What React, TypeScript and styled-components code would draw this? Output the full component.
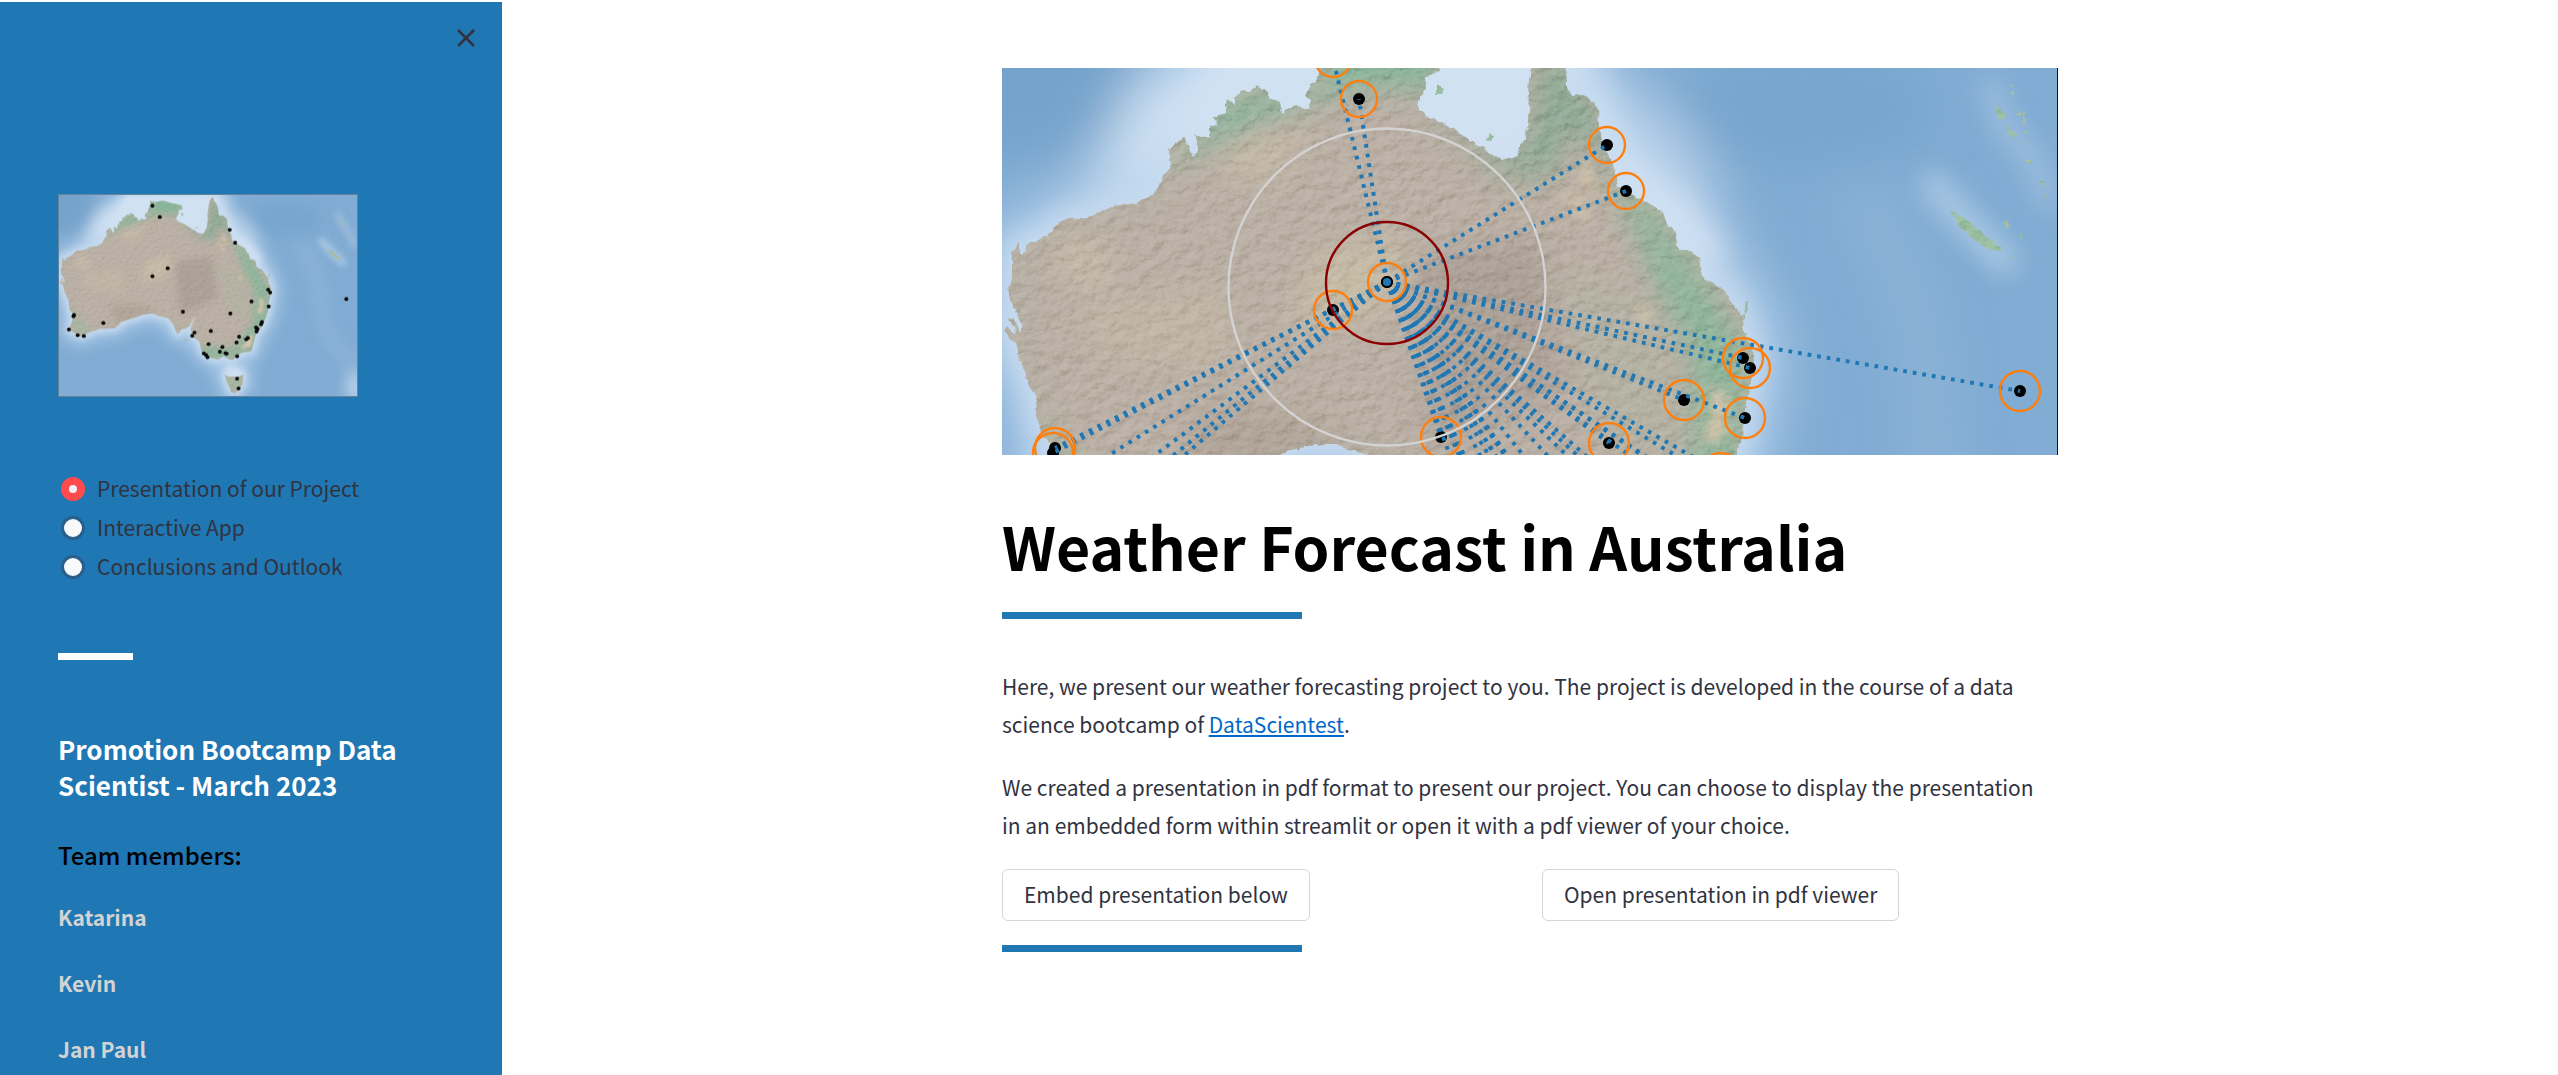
import React, { useId, useState } from "react";
import styled, { createGlobalStyle } from "styled-components";

const BLUE = "#1f77b4";
const INK = "#31333f";
const FONT = '"Noto Sans CJK SC", "Open Sans", sans-serif';

const GlobalStyle = createGlobalStyle`
  *, *::before, *::after { box-sizing: border-box; }
  body {
    margin: 0;
    background: #fff;
    color: ${INK};
    font-family: ${FONT};
    font-size: 21px;
    line-height: 38px;
  }
`;

const Page = styled.div`
  display: flex;
  height: 100vh;
  padding-top: 2px;
  overflow: hidden;
`;

const Sidebar = styled.aside`
  display: flex;
  flex-direction: column;
  flex: 0 0 502px;
  padding: 24px 24px 0 58px;
  background: ${BLUE};
  overflow: hidden;
`;

const CloseButton = styled.button`
  display: flex;
  align-self: flex-end;
  padding: 0;
  border: 0;
  background: none;
  color: ${INK};
  cursor: pointer;
`;

const Thumbnail = styled.figure`
  flex: none;
  width: 300px;
  height: 203px;
  margin: 144px 0 0;
  border: 1px solid #66839c;

  svg { display: block; width: 100%; height: 100%; }
`;

const RadioGroup = styled.fieldset`
  display: flex;
  flex-direction: column;
  margin: 72px 0 0;
  padding: 0;
  border: 0;
`;

const RadioLabel = styled.label`
  display: flex;
  align-items: center;
  gap: 12px;
  height: 39px;
  padding-left: 3px;
  cursor: pointer;
`;

const RadioText = styled.span`
  padding-bottom: 1px;
`;

const RadioInput = styled.input`
  appearance: none;
  flex: none;
  width: 24px;
  height: 24px;
  margin: 0;
  border: 3px solid #285f8d;
  border-radius: 50%;
  background: #f9f9fb;

  &:checked {
    border: 8px solid #ff4b4b;
    background: #f0f2f6;
  }
`;

const Rule = styled.hr<{ $width: number; $color: string }>`
  flex: none;
  width: ${(p) => p.$width}px;
  height: 7px;
  margin: 0;
  border: 0;
  background: ${(p) => p.$color};
`;

const SidebarRule = styled.div`
  padding: 67px 0 71px;
`;

const Promotion = styled.h3`
  margin: 0;
  color: #fff;
  font-size: 26px;
  font-weight: 700;
  line-height: 36px;
`;

const TeamTitle = styled.h4`
  margin: 33px 0 0;
  color: #000;
  font-size: 24px;
  font-weight: 500;
  line-height: 38px;
`;

const TeamList = styled.ul`
  display: flex;
  flex-direction: column;
  gap: 28px;
  margin: 24px 0 0;
  padding: 0;
  list-style: none;
`;

const Member = styled.li`
  color: #d3d3d3;
  font-weight: 700;
`;

const Main = styled.main`
  flex: 1;
  display: flex;
  justify-content: center;
  padding: 66px 24px 0;
`;

const Column = styled.div`
  width: 100%;
  max-width: 1056px;
`;

const Banner = styled.figure`
  margin: 0;
  border-right: 1px solid #111;

  svg { display: block; width: 100%; height: auto; }
`;

const Title = styled.h1`
  margin: 51px 0 27px;
  color: #000;
  font-size: 59px;
  font-weight: 700;
  line-height: 79px;
`;

const Copy = styled.section`
  display: flex;
  flex-direction: column;
  gap: 25px;
  margin-top: 48px;
`;

const Paragraph = styled.p`
  margin: 0;
`;

const Link = styled.a`
  color: #0068c9;
`;

const Actions = styled.div`
  display: grid;
  grid-template-columns: 1fr 1fr;
  gap: 24px;
  margin: 25px 0 24px;
`;

const ActionButton = styled.button`
  justify-self: start;
  height: 52px;
  padding: 0 21px 2px;
  border: 1px solid #d6d6d8;
  border-radius: 6px;
  background: #fff;
  color: ${INK};
  font: inherit;
  cursor: pointer;
`;

/* Weather stations in map units; the first one is the hub. */
const STATIONS: [number, number][] = [
  [385, 214], [331, -9], [357, 31], [605, 77], [624, 123], [331, 242],
  [741, 290], [748, 300], [682, 332], [743, 350], [1018, 323], [53, 380],
  [51, 385], [35, 432], [66, 452], [88, 455], [157, 409], [439, 369],
  [607, 375], [538, 437], [480, 443], [472, 454], [719, 405], [716, 413],
  [698, 425], [703, 430], [700, 439], [638, 458], [669, 462], [663, 467],
  [629, 478], [530, 484], [579, 494], [570, 511], [590, 516], [594, 518],
  [631, 527], [513, 517], [521, 523], [526, 531], [631, 607], [636, 642],
];

const COAST =
  "M49 387 L47 375 39 364 35 349 34 329 24 309 18 292 14 275 7 269 1 262 5 258 14 267 12 260 6 250 12 251 18 265 20 258 14 245 8 232 6 220 10 210 10 185 17 174 17 184 20 186 26 176 32 173 46 167 58 154 66 150 74 151 84 150 96 145 110 138 135 135 153 125 162 107 169 99 167 82 172 77 182 69 188 82 192 89 196 80 193 65 200 70 208 69 208 58 216 56 210 50 218 47 224 45 224 32 232 36 232 30 242 22 249 24 255 17 266 24 268 31 278 34 280 45 292 37 307 41 308 32 303 27 308 18 314 14 317 0 322 -10 323 -27 340 -22 370 -27 400 -18 434 -12 438 3 423 9 424 19 414 37 424 49 442 55 460 67 474 76 482 79 488 86 503 92 514 89 518 78 523 72 525 59 527 42 526 19 529 0 534 -27 544 -41 551 -25 558 -15 564 0 565 19 570 28 582 26 596 39 597 59 602 79 611 95 613 107 616 118 629 126 643 134 652 138 661 145 666 158 672 162 677 182 686 182 697 189 700 209 709 215 720 220 732 237 741 249 742 265 749 277 752 292 748 319 743 342 740 369 734 387 723 416 699 445 690 481 682 510 646 516 613 542 582 528 564 540 529 531 505 510 497 475 473 457 466 428 479 386 466 416 452 428 434 433 420 451 405 416 387 392 365 387 351 383 342 380 335 376 322 376 308 378 289 382 278 387 222 405 199 428 146 430 111 442 75 457 34 433 46 404 Z";
const TASMANIA = "M587 593 L602 600 617 599 636 600 652 593 652 612 650 628 636 650 623 660 610 655 605 640 594 618 Z";
const ISLANDS =
  "M947 142 L962 150 978 163 991 173 1000 182 997 184 982 179 968 168 956 156 Z M992 34 L996 40 1004 47 1002 52 995 50 Z M1004 58 L1010 63 1015 67 1013 70 1006 65 Z M1008 16 h3 v3 h-3 Z M1009 24 h3 v3 h-3 Z M1014 46 l4 -3 1 3 -4 2 Z M1021 42 l2 1 1 13 -2 1 Z M1020 63 l5 0 0 3 -4 0 Z M1021 72 l5 2 -3 1 Z M1024 91 l5 0 0 4 -5 -1 Z M1037 111 l5 5 0 3 -4 -2 Z M1042 124 l4 4 -2 3 Z M1001 154 l4 -2 3 7 -4 0 Z M1017 166 l4 1 0 3 -4 0 Z M1008 189 h2 v2 h-2 Z M992 146 l1 4 Z M433 21 l3 -6 2 5 4 2 -2 4 -7 0 Z M484 71 l4 -4 4 1 -5 5 Z M741 249 l3 -15 3 -1 -1 8 -4 11 Z M440 472 l8 -5 16 -1 -10 7 Z";

const Terrain = () => {
  const id = useId().replace(/[^a-zA-Z0-9]/g, "");
  return (
    <>
      <defs>
        <clipPath id={`${id}land`}>
          <path d={COAST + TASMANIA + ISLANDS} />
        </clipPath>
        <filter id={`${id}soft`} x="-50%" y="-50%" width="200%" height="200%">
          <feGaussianBlur stdDeviation="14" />
        </filter>
        <filter id={`${id}wide`} x="-60%" y="-60%" width="220%" height="220%">
          <feGaussianBlur stdDeviation="26" />
        </filter>
        <filter id={`${id}near`} x="-20%" y="-20%" width="140%" height="140%">
          <feGaussianBlur stdDeviation="6" />
        </filter>
        <filter id={`${id}rough`} x="0" y="0" width="100%" height="100%">
          <feTurbulence type="fractalNoise" baseFrequency="0.16" numOctaves="3" seed="4" result="n" />
          <feDisplacementMap in="SourceGraphic" in2="n" scale="5" xChannelSelector="R" yChannelSelector="G" />
        </filter>
        <filter id={`${id}relief`} x="0" y="0" width="100%" height="100%" colorInterpolationFilters="sRGB">
          <feTurbulence type="fractalNoise" baseFrequency="0.07 0.1" numOctaves="4" seed="12" result="h" />
          <feDiffuseLighting in="h" surfaceScale="3" diffuseConstant="0.86" lightingColor="#ffffff">
            <feDistantLight azimuth="225" elevation="42" />
          </feDiffuseLighting>
        </filter>
      </defs>

      <rect x="0" y="-50" width="1060" height="722" fill="#81acd3" />
      <g filter={`url(#${id}wide)`}>
        <path d={COAST + TASMANIA} fill="#a9c8e6" stroke="#a9c8e6" strokeWidth="70" strokeLinejoin="round" />
        <path d="M70 150 L130 20 L230 -60 L600 -60 L600 60 L300 60 L160 110 Z" fill="#cfe1f3" />
        <path d="M590 -10 L690 60 L740 200 L760 260 L640 160 Z" fill="#b7d0e9" />
        <path d="M850 120 Q930 220 930 390 Q960 500 1060 560" fill="none" stroke="#98bbdc" strokeWidth="40" opacity="0.6" />
        <ellipse cx="1050" cy="640" rx="26" ry="60" fill="#cbdff2" />
        <ellipse cx="0" cy="0" rx="130" ry="90" fill="#74a3cb" />
        <ellipse cx="800" cy="40" rx="130" ry="60" fill="#77a5cd" />
      </g>
      <g filter={`url(#${id}soft)`}>
        <path d={COAST + TASMANIA} fill="#c8dcf0" stroke="#c8dcf0" strokeWidth="22" strokeLinejoin="round" />
        <path d="M170 80 L240 -50 L560 -50 L530 100 L300 60 Z" fill="#d0e1f2" />
        <path d="M600 50 L625 90 L680 140 L715 190 L640 140 Z" fill="#cfe0f2" stroke="#cfe0f2" strokeWidth="22" />
        <path d="M930 115 L960 150 L1005 195" stroke="#b9d3eb" strokeWidth="20" fill="none" strokeLinecap="round" />
        <path d="M985 10 L1000 55 L1030 90 L1050 140" stroke="#a6c5e2" strokeWidth="16" fill="none" />
        <path d="M590 560 L650 570 L655 600 L590 600 Z" fill="#d2e3f4" />
      </g>

      <g filter={`url(#${id}rough)`}>
        <g clipPath={`url(#${id}land)`}>
          <rect x="0" y="-50" width="1060" height="722" fill="#b9aea3" />
          <g filter={`url(#${id}soft)`}>
            <path d={COAST} fill="none" stroke="#a7b09f" strokeWidth="12" opacity="0.5" />
            <path d="M160 105 L190 75 L225 30 L320 20 L330 -40 L440 -30 L435 20 L350 20 L240 60 Z" fill="#85b298" />
            <path d="M415 30 L510 95 L530 60 L545 -45 L570 0 L600 50 L612 110 L570 60 L550 110 L500 110 Z" fill="#83a890" opacity="0.8" />
            <path d="M605 90 L650 140 L700 210 L745 280 L735 400 L690 500 L600 540 L510 530 L500 490 L620 500 L690 400 L690 290 L650 210 Z" fill="#8cb399" />
            <path d="M560 200 L660 250 L680 400 L600 380 Z" fill="#afb09f" opacity="0.7" />
            <path d="M30 340 L60 380 L110 430 L60 455 Z" fill="#a3b39f" />
            <path d="M410 190 L540 170 L560 320 L430 380 Z" fill="#a59a90" opacity="0.75" />
            <path d="M180 345 L300 345 L350 380 L200 410 Z" fill="#aa9d90" opacity="0.7" />
            <path d="M310 190 L380 170 L410 190 L370 250 L290 265 Z" fill="#c6bba4" opacity="0.8" />
            <path d="M60 170 L110 190 L100 220 L60 200 Z" fill="#c9bea8" opacity="0.8" />
            <path d="M80 240 L220 220 L230 300 L100 290 Z" fill="#c2b8a4" opacity="0.6" />
            <path d="M230 80 L310 60 L270 110 L220 110 Z" fill="#c4bba6" opacity="0.8" />
            <path d={TASMANIA} fill="#9db59b" />
          </g>
          <g filter={`url(#${id}near)`}>
            <path d="M565 125 L585 150 M580 95 L590 125 M645 240 L640 258" stroke="#cfc0a6" strokeWidth="10" />
            <path d="M708 315 L712 345 L700 375 L720 370 L725 330 Z M660 480 L640 505 L680 490 L690 440 Z" fill="#dcc4ab" />
            <path d="M478 390 L470 425" stroke="#d4c6b3" strokeWidth="8" />
          </g>
          <path d={ISLANDS} fill="#98bd9f" />
          <rect
            x="0" y="-50" width="1060" height="722"
            filter={`url(#${id}relief)`}
            opacity="0.4"
            style={{ mixBlendMode: "soft-light" }}
          />
        </g>
      </g>
    </>
  );
};

const StationMap = () => (
  <svg viewBox="0 -47 1056 716" preserveAspectRatio="none" role="img" aria-label="Weather stations in Australia">
    <Terrain />
    {STATIONS.map(([x, y], i) => (
      <circle key={i} cx={x} cy={y} r="7" fill="#0a0a0a" />
    ))}
  </svg>
);

const NetworkMap = () => {
  const [hx, hy] = STATIONS[0];
  return (
    <svg viewBox="0 0 1055 387" role="img" aria-label="Links between the weather stations">
      <Terrain />
      {STATIONS.map(([x, y], i) => (
        <circle key={i} cx={x} cy={y} r="6" fill="#000" />
      ))}
      <g stroke={BLUE} strokeWidth="4" strokeDasharray="3.7 6">
        {STATIONS.slice(1).map(([x, y], i) => (
          <line key={i} x1={hx} y1={hy} x2={x} y2={y} />
        ))}
      </g>
      <circle cx={hx} cy={hy} r="5" fill={BLUE} stroke="#000" strokeWidth="2" />
      <g fill="none" stroke="#ff7f0e" strokeWidth="2.4">
        {STATIONS.map(([x, y], i) => (
          <circle key={i} cx={x} cy={y} r={y < 150 ? 18 : y < 280 ? 19 : 20} />
        ))}
      </g>
      <circle cx={hx} cy="215" r="61" fill="none" stroke="#8b0000" strokeWidth="2.4" />
      <circle cx={hx} cy="219" r="158.5" fill="none" stroke="#d3d3d3" strokeWidth="2.4" />
    </svg>
  );
};

const CloseIcon = () => (
  <svg width="24" height="24" viewBox="0 0 24 24" fill="none" stroke="currentColor" strokeWidth="2.6" aria-hidden="true">
    <path d="M4 4 L20 20 M20 4 L4 20" />
  </svg>
);

const PAGES = ["Presentation of our Project", "Interactive App", "Conclusions and Outlook"];
const MEMBERS = ["Katarina", "Kevin", "Jan Paul"];

export default function App() {
  const [page, setPage] = useState(PAGES[0]);
  return (
    <>
      <GlobalStyle />
      <Page>
        <Sidebar>
          <CloseButton type="button" aria-label="Close sidebar">
            <CloseIcon />
          </CloseButton>
          <Thumbnail>
            <StationMap />
          </Thumbnail>
          <RadioGroup aria-label="Pages">
            {PAGES.map((name) => (
              <RadioLabel key={name}>
                <RadioInput type="radio" name="page" checked={page === name} onChange={() => setPage(name)} />
                <RadioText>{name}</RadioText>
              </RadioLabel>
            ))}
          </RadioGroup>
          <SidebarRule>
            <Rule $width={75} $color="#fff" />
          </SidebarRule>
          <Promotion>Promotion Bootcamp Data Scientist - March 2023</Promotion>
          <TeamTitle>Team members:</TeamTitle>
          <TeamList>
            {MEMBERS.map((name) => (
              <Member key={name}>{name}</Member>
            ))}
          </TeamList>
        </Sidebar>
        <Main>
          <Column>
            <Banner>
              <NetworkMap />
            </Banner>
            <Title>Weather Forecast in Australia</Title>
            <Rule $width={300} $color={BLUE} />
            <Copy>
              <Paragraph>
                Here, we present our weather forecasting project to you. The project is developed in the course of a
                data
                <br />
                science bootcamp of <Link href="#datascientest">DataScientest</Link>.
              </Paragraph>
              <Paragraph>
                We created a presentation in pdf format to present our project. You can choose to display the
                presentation
                <br />
                in an embedded form within streamlit or open it with a pdf viewer of your choice.
              </Paragraph>
            </Copy>
            <Actions>
              <ActionButton type="button">Embed presentation below</ActionButton>
              <ActionButton type="button">Open presentation in pdf viewer</ActionButton>
            </Actions>
            <Rule $width={300} $color={BLUE} />
          </Column>
        </Main>
      </Page>
    </>
  );
}
